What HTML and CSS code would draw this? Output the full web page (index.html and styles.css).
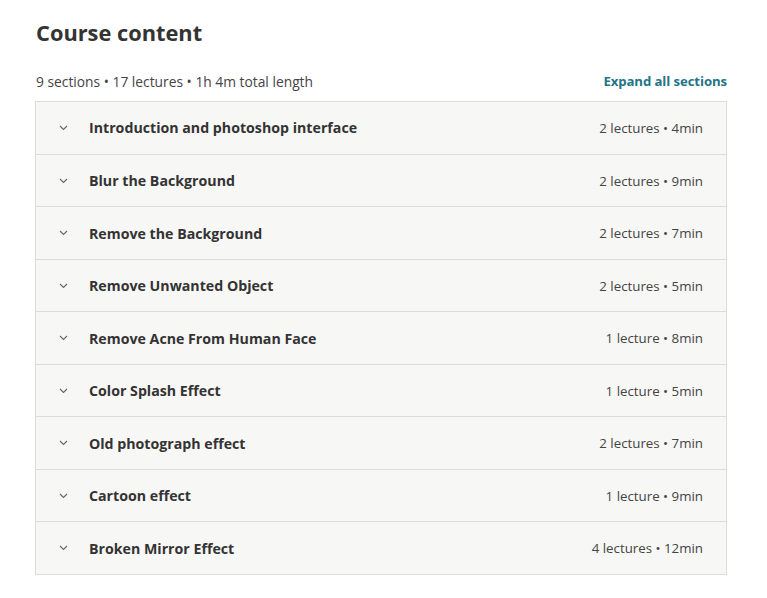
FILE: index.html
```html
<!DOCTYPE html>
<html>
<head>
<meta charset="utf-8">
<link rel="stylesheet" href="styles.css">
</head>
<body>
<div class="page">
  <h2 class="title">Course content</h2>
  <div class="meta">
    <span class="summary">9 sections • 17 lectures • 1h 4m total length</span>
    <span class="expand">Expand all sections</span>
  </div>
  <div class="sections">
    <div class="row"><span class="chev"><svg width="9" height="6" viewBox="0 0 9 6"><path d="M1 1l3.5 3.5L8 1" fill="none" stroke="#666" stroke-width="1.1"/></svg></span><span class="name">Introduction and photoshop interface</span><span class="info">2 lectures • 4min</span></div>
    <div class="row"><span class="chev"><svg width="9" height="6" viewBox="0 0 9 6"><path d="M1 1l3.5 3.5L8 1" fill="none" stroke="#666" stroke-width="1.1"/></svg></span><span class="name">Blur the Background</span><span class="info">2 lectures • 9min</span></div>
    <div class="row"><span class="chev"><svg width="9" height="6" viewBox="0 0 9 6"><path d="M1 1l3.5 3.5L8 1" fill="none" stroke="#666" stroke-width="1.1"/></svg></span><span class="name">Remove the Background</span><span class="info">2 lectures • 7min</span></div>
    <div class="row"><span class="chev"><svg width="9" height="6" viewBox="0 0 9 6"><path d="M1 1l3.5 3.5L8 1" fill="none" stroke="#666" stroke-width="1.1"/></svg></span><span class="name">Remove Unwanted Object</span><span class="info">2 lectures • 5min</span></div>
    <div class="row"><span class="chev"><svg width="9" height="6" viewBox="0 0 9 6"><path d="M1 1l3.5 3.5L8 1" fill="none" stroke="#666" stroke-width="1.1"/></svg></span><span class="name">Remove Acne From Human Face</span><span class="info">1 lecture • 8min</span></div>
    <div class="row"><span class="chev"><svg width="9" height="6" viewBox="0 0 9 6"><path d="M1 1l3.5 3.5L8 1" fill="none" stroke="#666" stroke-width="1.1"/></svg></span><span class="name">Color Splash Effect</span><span class="info">1 lecture • 5min</span></div>
    <div class="row"><span class="chev"><svg width="9" height="6" viewBox="0 0 9 6"><path d="M1 1l3.5 3.5L8 1" fill="none" stroke="#666" stroke-width="1.1"/></svg></span><span class="name">Old photograph effect</span><span class="info">2 lectures • 7min</span></div>
    <div class="row"><span class="chev"><svg width="9" height="6" viewBox="0 0 9 6"><path d="M1 1l3.5 3.5L8 1" fill="none" stroke="#666" stroke-width="1.1"/></svg></span><span class="name">Cartoon effect</span><span class="info">1 lecture • 9min</span></div>
    <div class="row"><span class="chev"><svg width="9" height="6" viewBox="0 0 9 6"><path d="M1 1l3.5 3.5L8 1" fill="none" stroke="#666" stroke-width="1.1"/></svg></span><span class="name">Broken Mirror Effect</span><span class="info">4 lectures • 12min</span></div>
  </div>
</div>
</body>
</html>
```

FILE: styles.css
```css
html, body {
  margin: 0;
  padding: 0;
  background: #ffffff;
}
body {
  font-family: "Open Sans", "Noto Sans", sans-serif;
  color: #2d2f31;
}
.page {
  width: 692px;
  padding: 18px 0 0 35px;
}
.title {
  margin: 0 0 0 1px;
  font-size: 21.8px;
  font-weight: 700;
  line-height: 30px;
  color: #333333;
}
.meta {
  display: flex;
  justify-content: space-between;
  align-items: center;
  margin-top: 20px;
  height: 26px;
  padding-left: 1px;
}
.summary {
  font-size: 13.8px;
  color: #444444;
}
.expand {
  font-size: 13.2px;
  font-weight: 700;
  color: #247487;
  letter-spacing: -0.1px;
}
.sections {
  margin-top: 7px;
  border: 1px solid #dcdcd8;
  background: #f7f7f5;
}
.row {
  box-sizing: border-box;
  display: flex;
  align-items: center;
  height: 52.5px;
  padding: 1px 23px 0 23px;
  border-top: 1px solid #dcdcd8;
}
.row:first-child {
  height: 51.5px;
  padding-top: 0;
  border-top: none;
}
.chev {
  width: 30px;
  display: flex;
  align-items: center;
}
.name {
  flex: 1;
  font-size: 14.2px;
  font-weight: 700;
  color: #333333;
}
.info {
  font-size: 13.3px;
  color: #444444;
}
```
